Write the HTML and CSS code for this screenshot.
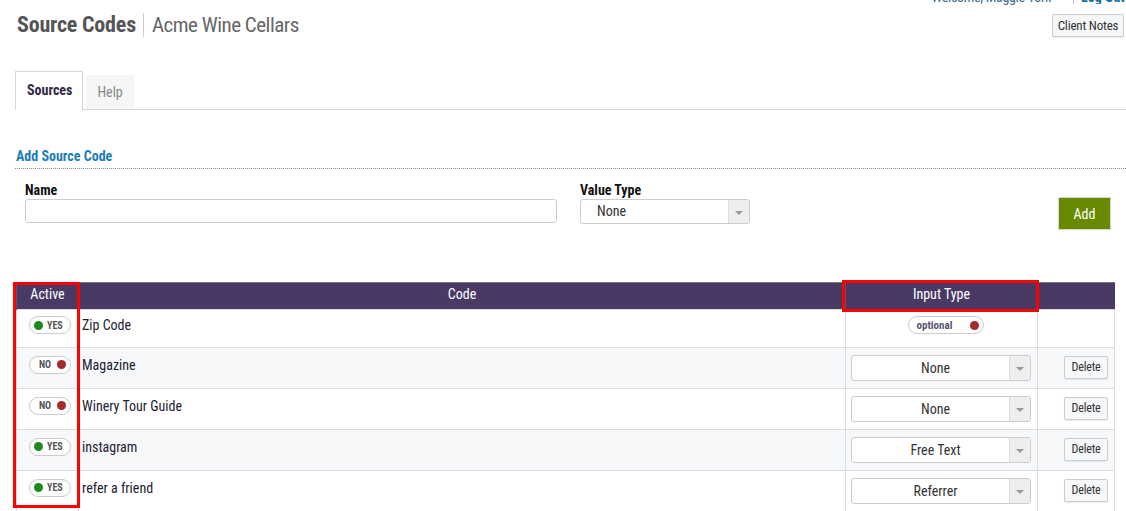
FILE: index.html
```html
<!DOCTYPE html>
<html>
<head>
<meta charset="utf-8">
<link rel="stylesheet" href="styles.css">
</head>
<body>
<div class="page">
  <div class="userbar">
    <span class="welcome">Welcome, Maggie York</span>
    <span class="sep"></span>
    <span class="logout">Log Out</span>
  </div>
  <div class="titlerow">
    <h1 class="title"><span class="title-main">Source Codes</span><span class="title-sub">Acme Wine Cellars</span></h1>
    <button class="btn notes">Client Notes</button>
  </div>
  <div class="tabs">
    <div class="tab active">Sources</div>
    <div class="tab">Help</div>
  </div>
  <h2 class="section">Add Source Code</h2>
  <div class="form">
    <div class="field name-field">
      <label>Name</label>
      <div class="input"></div>
    </div>
    <div class="field type-field">
      <label>Value Type</label>
      <div class="select left"><span class="sel-text">None</span><span class="arrow"><i></i></span></div>
    </div>
    <button class="add">Add</button>
  </div>
  <div class="tablewrap">
    <table class="grid">
      <colgroup><col class="c1"><col class="c2"><col class="c3"><col class="c4"></colgroup>
      <thead>
        <tr><th>Active</th><th>Code</th><th>Input Type</th><th></th></tr>
      </thead>
      <tbody>
        <tr class="first">
          <td class="act"><span class="pill yes"><i class="dot g"></i>YES</span></td>
          <td class="code">Zip Code</td>
          <td class="itype"><span class="pill opt">optional<i class="dot r"></i></span></td>
          <td class="del"></td>
        </tr>
        <tr class="alt">
          <td class="act"><span class="pill no">NO<i class="dot r"></i></span></td>
          <td class="code">Magazine</td>
          <td class="itype"><div class="select"><span class="sel-text">None</span><span class="arrow"><i></i></span></div></td>
          <td class="del"><button class="btn delete">Delete</button></td>
        </tr>
        <tr>
          <td class="act"><span class="pill no">NO<i class="dot r"></i></span></td>
          <td class="code">Winery Tour Guide</td>
          <td class="itype"><div class="select"><span class="sel-text">None</span><span class="arrow"><i></i></span></div></td>
          <td class="del"><button class="btn delete">Delete</button></td>
        </tr>
        <tr class="alt">
          <td class="act"><span class="pill yes"><i class="dot g"></i>YES</span></td>
          <td class="code">instagram</td>
          <td class="itype"><div class="select"><span class="sel-text">Free Text</span><span class="arrow"><i></i></span></div></td>
          <td class="del"><button class="btn delete">Delete</button></td>
        </tr>
        <tr>
          <td class="act"><span class="pill yes"><i class="dot g"></i>YES</span></td>
          <td class="code">refer a friend</td>
          <td class="itype"><div class="select"><span class="sel-text">Referrer</span><span class="arrow"><i></i></span></div></td>
          <td class="del"><button class="btn delete">Delete</button></td>
        </tr>
      </tbody>
    </table>
    <div class="hl hl-active"></div>
    <div class="hl hl-input"></div>
  </div>
</div>
</body>
</html>
```
FILE: styles.css
```css
html, body {
  margin: 0;
  padding: 0;
  background: #fff;
  overflow: hidden;
}
body {
  font-family: "Roboto Condensed", "DejaVu Sans Condensed", "Liberation Sans Narrow", Roboto, sans-serif;
  font-stretch: condensed;
  color: #2b2b3b;
  font-size: 14px;
  width: 1126px;
  height: 511px;
}
.page {
  padding-left: 15px;
}
.userbar {
  display: flex;
  justify-content: flex-end;
  align-items: flex-end;
  height: 4px;
  line-height: 14px;
  font-size: 14px;
}
.welcome {
  color: #3d6a8c;
  margin-right: 22px;
  letter-spacing: -0.3px;
}
.sep {
  width: 1px;
  height: 18px;
  background: #bbb;
  margin-right: 7px;
}
.logout {
  color: #1a6fa8;
  font-weight: bold;
  width: 45px;
  overflow: hidden;
  white-space: nowrap;
}
.titlerow {
  display: flex;
  justify-content: space-between;
  align-items: flex-start;
  padding-right: 2px;
}
.title {
  margin: 9px 0 0 2px;
  font-size: 22px;
  line-height: 24px;
  font-weight: normal;
  display: flex;
  align-items: center;
}
.title-main {
  font-weight: bold;
  color: #555;
  padding-right: 7px;
  border-right: 1px solid #ccc;
  line-height: 24px;
  letter-spacing: -0.2px;
}
.title-sub {
  color: #666;
  padding-left: 8px;
  font-size: 21px;
  letter-spacing: -0.5px;
}
.btn {
  font-family: inherit;
  font-stretch: condensed;
  background: #f6f7f9;
  border: 1px solid #c9ccd1;
  border-radius: 2px;
  color: #333;
  font-size: 13px;
  padding: 0;
  box-shadow: 0 1px 1px rgba(0,0,0,0.08);
  letter-spacing: -0.2px;
}
.notes {
  margin-top: 10px;
  width: 72px;
  height: 23px;
}
.tabs {
  display: flex;
  align-items: flex-end;
  gap: 3px;
  margin-top: 35px;
  border-bottom: 1px solid #d5d7db;
  height: 37px;
}
.tab {
  height: 34px;
  line-height: 34px;
  padding: 0 11px 0 11px;
  background: #f5f6f8;
  color: #888;
  font-size: 14px;
}
.tab.active {
  height: 38px;
  line-height: 36px;
  background: #fff;
  border: 1px solid #d5d7db;
  border-bottom: none;
  color: #2e2a45;
  font-weight: bold;
  padding: 0 10px 0 11px;
  margin-bottom: -1px;
}
.section {
  margin: 37px 0 0 0;
  padding: 0 0 3px 1px;
  font-size: 14px;
  line-height: 18px;
  color: #1d7cb8;
  font-weight: bold;
  border-bottom: 1px dotted #888;
}
.form {
  display: flex;
  align-items: flex-start;
  padding: 12px 15px 0 10px;
}
.field label {
  display: block;
  font-weight: bold;
  color: #111;
  font-size: 14px;
  line-height: 18px;
  height: 18px;
}
.name-field {
  width: 532px;
}
.input {
  height: 22px;
  border: 1px solid #c9ccd1;
  border-radius: 3px;
  background: #fff;
}
.type-field {
  margin-left: 23px;
}
.select {
  display: flex;
  border: 1px solid #c9ccd1;
  border-radius: 3px;
  background: #fff;
  width: 180px;
  box-sizing: border-box;
  height: 26px;
  overflow: hidden;
}
.select.left {
  width: 170px;
  height: 25px;
}
.sel-text {
  flex: 1;
  text-align: center;
  line-height: 24px;
  color: #333;
  font-size: 14px;
  padding-left: 10px;
}
.select.left .sel-text {
  text-align: left;
  padding-left: 16px;
  line-height: 23px;
}
.arrow {
  width: 20px;
  background: #eee;
  border-left: 1px solid #ddd;
  display: flex;
  align-items: center;
  justify-content: center;
}
.arrow i {
  width: 0;
  height: 0;
  border-left: 4px solid transparent;
  border-right: 4px solid transparent;
  border-top: 4px solid #999;
  margin-top: 2px;
}
.add {
  margin-left: auto;
  margin-top: 16px;
  width: 53px;
  height: 33px;
  background: #678a00;
  color: #fff;
  border: 1px solid #d7dccc;
  font-family: inherit;
  font-stretch: condensed;
  font-size: 14px;
}
.tablewrap {
  position: relative;
  margin-top: 52px;
  margin-left: 1px;
  width: 1098px;
}
.grid {
  border-collapse: collapse;
  width: 1098px;
  table-layout: fixed;
}
.c1 { width: 62px; }
.c2 { width: 767px; }
.c3 { width: 192px; }
.c4 { width: 77px; }
.grid thead th {
  background: #483a65;
  color: #fff;
  font-weight: normal;
  font-size: 14px;
  height: 27px;
  padding: 0 0 4px 0;
  border-top: 1px solid #777;
  border-left: 1px solid #5c5078;
  text-align: center;
  box-sizing: border-box;
}
.grid tbody tr {
  height: 41px;
}
.grid tbody tr.first {
  height: 38px;
}
.grid td {
  border: 1px solid #d9dce1;
  padding: 0;
}
.grid tr.alt td {
  background: #f7f8fa;
}
.grid td.code {
  padding-left: 3px;
  padding-bottom: 7px;
  font-size: 14px;
  color: #222233;
}
.grid td.act {
  padding-left: 12px;
  padding-bottom: 7px;
}
.grid td.itype {
  padding-left: 5px;
}
.grid tr.first td.itype {
  text-align: center;
  padding-left: 8px;
  padding-bottom: 7px;
}
.grid td.del {
  text-align: right;
  padding-right: 6px;
  padding-bottom: 2px;
}
.pill {
  display: inline-flex;
  align-items: center;
  box-sizing: border-box;
  height: 18px;
  border: 1px solid #ccc;
  border-radius: 9px;
  background: #fff;
  font-size: 10px;
  font-weight: bold;
  color: #555;
  vertical-align: middle;
}
.pill.yes, .pill.no {
  width: 42px;
}
.pill.yes {
  padding-left: 4px;
}
.pill.no {
  padding-left: 9px;
}
.dot {
  display: inline-block;
  width: 9px;
  height: 9px;
  border-radius: 50%;
}
.dot.g {
  background: #1b8a1b;
  margin-right: 4px;
}
.dot.r {
  background: #a52a2a;
  margin-left: 6px;
}
.pill.opt {
  width: 76px;
  padding-left: 8px;
  font-size: 11px;
  color: #5a5570;
}
.pill.opt .dot.r {
  margin-left: 18px;
}
.delete {
  width: 44px;
  height: 23px;
  font-size: 12px;
}
.hl {
  position: absolute;
  border: 3px solid #ff0000;
  box-sizing: border-box;
  pointer-events: none;
}
.hl-active {
  left: -3px;
  top: 0;
  width: 67px;
  height: 226px;
}
.hl-input {
  left: 826px;
  top: -2px;
  width: 197px;
  height: 32px;
}
```
